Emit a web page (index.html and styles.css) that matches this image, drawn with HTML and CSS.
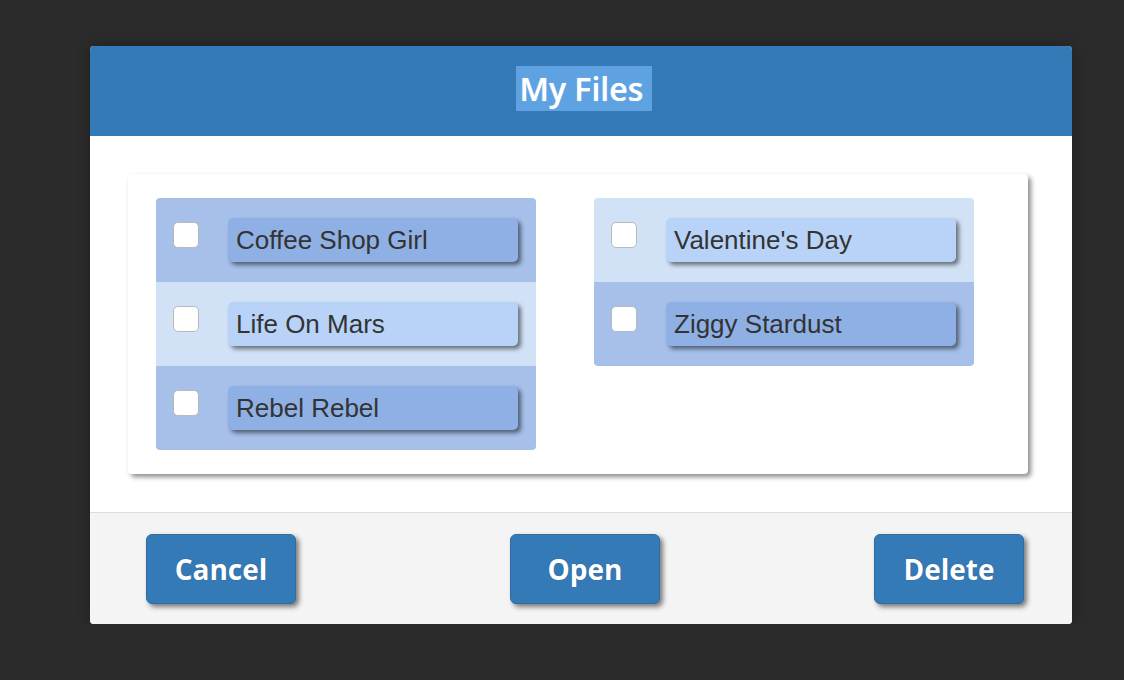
FILE: index.html
```html
<!DOCTYPE html>
<html>
<head>
<meta charset="utf-8">
<link rel="stylesheet" href="styles.css">
</head>
<body>
<div class="page">
  <div class="dialog">
    <div class="header"><span class="title">My Files </span></div>
    <div class="content">
      <div class="card">
        <div class="list">
          <div class="row dark"><span class="check"></span><span class="label">Coffee Shop Girl</span></div>
          <div class="row light"><span class="check"></span><span class="label">Life On Mars</span></div>
          <div class="row dark"><span class="check"></span><span class="label">Rebel Rebel</span></div>
        </div>
        <div class="list">
          <div class="row light"><span class="check"></span><span class="label">Valentine's Day</span></div>
          <div class="row dark"><span class="check"></span><span class="label">Ziggy Stardust</span></div>
        </div>
      </div>
    </div>
    <div class="footer">
      <button class="btn">Cancel</button>
      <button class="btn">Open</button>
      <button class="btn">Delete</button>
    </div>
  </div>
</div>
</body>
</html>
```
FILE: styles.css
```css
html, body {
  margin: 0;
  background: #2b2b2b;
}
.page {
  padding: 46px 0 0 90px;
}
.dialog {
  width: 982px;
  border-radius: 4px;
  background: #fff;
  box-shadow: 0 0 14px rgba(0,0,0,0.25);
  overflow: hidden;
}
.header {
  height: 90px;
  background: #337ab7;
  display: flex;
  align-items: flex-start;
  justify-content: center;
}
.title {
  margin-top: 20px;
  font-family: "Open Sans", sans-serif;
  font-weight: 600;
  font-size: 32px;
  line-height: 45px;
  color: #fff;
  background: #5fa2e2;
  padding: 0 0 0 3px;
  margin-left: 6px;
  white-space: pre;
  text-shadow: 0 0 1px rgba(255,255,255,0.6);
}
.content {
  padding: 38px 44px 38px 38px;
}
.card {
  width: 900px;
  box-sizing: border-box;
  height: 300px;
  padding: 24px 28px;
  background: #fff;
  border-radius: 4px;
  box-shadow: 3px 3px 5px rgba(0,0,0,0.45);
  display: flex;
  align-items: flex-start;
  gap: 58px;
}
.list {
  width: 380px;
  border-radius: 4px;
  overflow: hidden;
}
.row {
  height: 84px;
  display: flex;
  align-items: flex-start;
  padding-left: 17px;
}
.row.dark { background: #a6c0ea; }
.row.light { background: #d1e2f7; }
.check {
  width: 24px;
  height: 24px;
  margin-top: 24px;
  border: 1px solid #b9b9b9;
  border-radius: 5px;
  background: #fff;
  flex: none;
}
.label {
  margin-top: 20px;
  margin-left: 29px;
  width: 290px;
  height: 44px;
  box-sizing: border-box;
  padding-left: 8px;
  border-radius: 5px;
  font-family: "Liberation Sans", Arial, sans-serif;
  font-size: 26px;
  line-height: 44px;
  color: #333;
  box-shadow: 3px 3px 4px rgba(0,0,0,0.5);
}
.row.dark .label { background: #8fb0e5; }
.row.light .label { background: #b8d3f7; }
.footer {
  border-top: 1px solid #dcdcdc;
  background: #f4f4f4;
  padding: 21px 48px 20px 56px;
  display: flex;
  justify-content: space-between;
}
.btn {
  width: 150px;
  height: 70px;
  background: #337ab7;
  border: 1px solid #2e6da4;
  border-radius: 6px;
  color: #fff;
  font-family: "Open Sans", sans-serif;
  font-weight: 700;
  font-size: 28px;
  box-shadow: 3px 3px 5px rgba(0,0,0,0.5);
  padding: 0;
  cursor: pointer;
  text-shadow: 0 0 1px rgba(0,0,0,0.35);
}
```
